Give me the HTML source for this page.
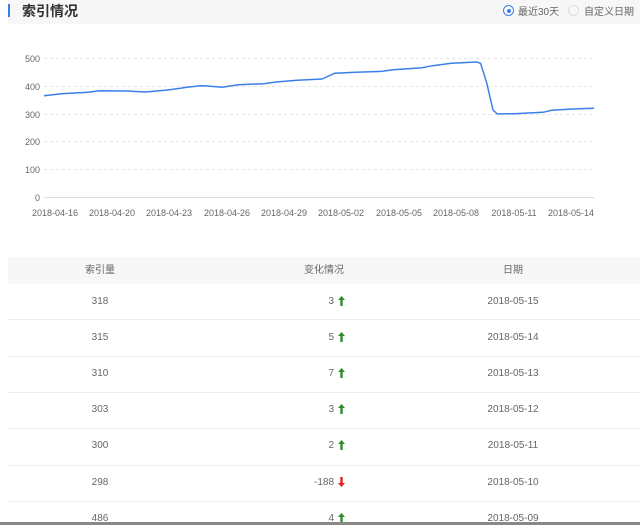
<!DOCTYPE html>
<html><head><meta charset="utf-8"><style>
body{margin:0;width:640px;height:525px;overflow:hidden;background:#fff;font-family:"Liberation Sans","Noto Sans CJK SC",sans-serif;position:relative}
.hd{position:absolute;left:8px;top:0;width:632px;height:24px;background:#f7f7f7}
.bar{position:absolute;left:8px;top:4px;width:2px;height:13px;background:#3a7ff0}
.tt{position:absolute;left:22px;top:1px;font-size:14px;color:#333;font-weight:bold}
.rd{position:absolute;top:3px;font-size:10px;color:#666}
.c{position:absolute;width:9px;height:9px;border:1px solid #ccc;border-radius:50%;top:5px}
.th{position:absolute;left:8px;top:257px;width:632px;height:27px;background:#f7f7f7}
.t{position:absolute;font-size:10px;color:#666;text-align:center;width:120px;line-height:12px;height:12px}
.r{position:absolute;font-size:10px;color:#666;text-align:right;width:100px;left:234px;line-height:12px}
.ln{position:absolute;left:8px;width:632px;height:1px;background:#eee}
svg.a{position:absolute;left:338px}
</style></head><body>
<div class="hd"></div><div class="bar"></div><div class="tt">索引情况</div>
<div class="c" style="left:503px;border-color:#3a7ff0"><div style="position:absolute;left:2.5px;top:2.5px;width:4px;height:4px;border-radius:50%;background:#3a7ff0"></div></div>
<div class="rd" style="left:518px">最近30天</div>
<div class="c" style="left:568px;border-color:#ddd"></div>
<div class="rd" style="left:584px">自定义日期</div>
<svg style="position:absolute;left:0;top:0" width="640" height="230">
<g stroke="#e5e5e5" stroke-dasharray="3,3">
<line x1="44" y1="58.5" x2="594" y2="58.5"/><line x1="44" y1="86.5" x2="594" y2="86.5"/><line x1="44" y1="114.5" x2="594" y2="114.5"/><line x1="44" y1="141.5" x2="594" y2="141.5"/><line x1="44" y1="169.5" x2="594" y2="169.5"/></g>
<line x1="44" y1="197.5" x2="594" y2="197.5" stroke="#ddd"/>
<g font-size="9" fill="#666" text-anchor="end" font-family="Liberation Sans,sans-serif">
<text x="40" y="62">500</text><text x="40" y="90">400</text><text x="40" y="118">300</text><text x="40" y="145">200</text><text x="40" y="173">100</text><text x="40" y="201">0</text></g>
<g font-size="9" fill="#666" text-anchor="middle" font-family="Liberation Sans,sans-serif">
<text x="55" y="216">2018-04-16</text><text x="112" y="216">2018-04-20</text><text x="169" y="216">2018-04-23</text><text x="227" y="216">2018-04-26</text><text x="284" y="216">2018-04-29</text><text x="341" y="216">2018-05-02</text><text x="399" y="216">2018-05-05</text><text x="456" y="216">2018-05-08</text><text x="514" y="216">2018-05-11</text><text x="571" y="216">2018-05-14</text></g>
<polyline fill="none" stroke="#3a7fe8" stroke-width="1.5" stroke-linejoin="round" points="44,95.7 61.5,93.7 88.6,92.3 99,90.7 126,91 145,92 167.8,90 180.4,88.3 186.6,87.3 201,85.7 207.5,86 222,87.3 238.7,84.7 263.8,83.7 276,82 297,80.3 322,79 334.6,73.3 355.5,72.3 382.6,71.3 393,69.7 422.2,67.7 432.6,65.7 451.4,63.3 476.4,62 480.6,63.3 486.8,83.3 493,110 497.3,114 514,113.7 543,112.3 551.5,110.3 572.3,109 594,108.3"/>
</svg>
<div class="th"></div>
<div class="t" style="left:40px;top:265px">索引量</div><div class="t" style="left:264px;top:265px">变化情况</div><div class="t" style="left:453px;top:265px">日期</div>
<div class="ln" style="top:319px"></div><div class="ln" style="top:356px"></div><div class="ln" style="top:392px"></div><div class="ln" style="top:428px"></div><div class="ln" style="top:465px"></div><div class="ln" style="top:501px"></div>
<div class="t" style="left:40px;top:296px">318</div><div class="r" style="top:296px">3</div><svg class="a" style="top:296px" width="7" height="10"><path d="M3.5 0L0 4h2.3v6h2.4V4H7z" fill="#2e8b2e"/></svg><div class="t" style="left:453px;top:296px">2018-05-15</div>
<div class="t" style="left:40px;top:332px">315</div><div class="r" style="top:332px">5</div><svg class="a" style="top:332px" width="7" height="10"><path d="M3.5 0L0 4h2.3v6h2.4V4H7z" fill="#2e8b2e"/></svg><div class="t" style="left:453px;top:332px">2018-05-14</div>
<div class="t" style="left:40px;top:368px">310</div><div class="r" style="top:368px">7</div><svg class="a" style="top:368px" width="7" height="10"><path d="M3.5 0L0 4h2.3v6h2.4V4H7z" fill="#2e8b2e"/></svg><div class="t" style="left:453px;top:368px">2018-05-13</div>
<div class="t" style="left:40px;top:404px">303</div><div class="r" style="top:404px">3</div><svg class="a" style="top:404px" width="7" height="10"><path d="M3.5 0L0 4h2.3v6h2.4V4H7z" fill="#2e8b2e"/></svg><div class="t" style="left:453px;top:404px">2018-05-12</div>
<div class="t" style="left:40px;top:440px">300</div><div class="r" style="top:440px">2</div><svg class="a" style="top:440px" width="7" height="10"><path d="M3.5 0L0 4h2.3v6h2.4V4H7z" fill="#2e8b2e"/></svg><div class="t" style="left:453px;top:440px">2018-05-11</div>
<div class="t" style="left:40px;top:477px">298</div><div class="r" style="top:477px">-188</div><svg class="a" style="top:477px" width="7" height="10"><path d="M3.5 10L0 6h2.3V0h2.4v6H7z" fill="#e02020"/></svg><div class="t" style="left:453px;top:477px">2018-05-10</div>
<div class="t" style="left:40px;top:513px">486</div><div class="r" style="top:513px">4</div><svg class="a" style="top:513px" width="7" height="10"><path d="M3.5 0L0 4h2.3v6h2.4V4H7z" fill="#2e8b2e"/></svg><div class="t" style="left:453px;top:513px">2018-05-09</div>
<div style="position:absolute;left:0;top:522px;width:640px;height:3px;background:#888"></div>
</body></html>
